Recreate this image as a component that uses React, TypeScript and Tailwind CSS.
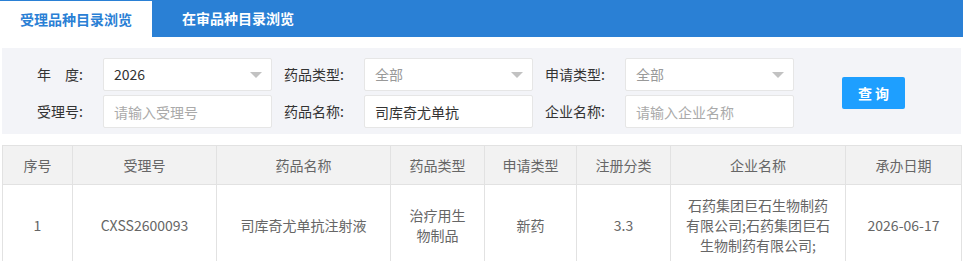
import React, { useState } from "react";

const font = { fontFamily: '"Noto Sans CJK SC", "Microsoft YaHei", sans-serif' };

const SelectBox = ({ value, muted }: { value: string; muted?: boolean }) => (
    <div className="flex items-center justify-between w-[169px] h-[33px] bg-white border border-[#e6e6e6] rounded-[2px] pl-[10px] pr-[9px]">
        <span className={muted ? "text-[14px] text-[#999]" : "text-[14px] text-[#333]"}>{value}</span>
        <svg width="12" height="6" viewBox="0 0 12 6">
            <path d="M0 0 L12 0 L6 6 Z" fill="#c2c2c2" />
        </svg>
    </div>
);

const TextBox = ({ value, placeholder }: { value?: string; placeholder: string }) => (
    <input
        type="text"
        defaultValue={value}
        placeholder={placeholder}
        className="w-[169px] h-[33px] bg-white border border-[#e6e6e6] rounded-[2px] pl-[10px] text-[14px] text-[#333] placeholder:text-[#aaa] outline-none"
        style={font}
    />
);

const Label = ({ children }: { children: React.ReactNode }) => (
    <label className="w-[72px] mr-[20px] text-right text-[14px] text-[#333] whitespace-nowrap">{children}</label>
);

const columns = [
    { title: "序号", width: "w-[70px]" },
    { title: "受理号", width: "w-[144px]" },
    { title: "药品名称", width: "w-[174px]" },
    { title: "药品类型", width: "w-[94px]" },
    { title: "申请类型", width: "w-[92px]" },
    { title: "注册分类", width: "w-[94px]" },
    { title: "企业名称", width: "w-[175px]" },
    { title: "承办日期", width: "w-[116px]" },
];

const rows = [
    [
        "1",
        "CXSS2600093",
        "司库奇尤单抗注射液",
        "治疗用生物制品",
        "新药",
        "3.3",
        "石药集团巨石生物制药有限公司;石药集团巨石生物制药有限公司;",
        "2026-06-17",
    ],
];

export default function App() {
    const [tab, setTab] = useState(0);
    const tabs = ["受理品种目录浏览", "在审品种目录浏览"];

    return (
        <div className="w-[963px] bg-white" style={font}>
            {/* Tabs */}
            <div className="flex h-[37px] bg-[#2a80d5]">
                {tabs.map((t, i) => (
                    <button
                        key={t}
                        onClick={() => setTab(i)}
                        className={
                            i === tab
                                ? "mt-[1px] h-[36px] px-[20px] bg-white text-[#2a80d5] text-[14px] font-bold"
                                : "ml-[10px] h-[37px] px-[20px] text-white text-[14px] font-bold"
                        }
                    >
                        {t}
                    </button>
                ))}
            </div>

            <div className="px-[2px]">
                {/* Filter */}
                <div className="mt-[11px] flex items-center bg-[#f3f4f8] pl-[9px] pt-[10px] pb-[6px]">
                    <div className="flex flex-col gap-[4px]">
                        <div className="flex items-center">
                            <Label>年　度:</Label>
                            <SelectBox value="2026" />
                            <Label>药品类型:</Label>
                            <SelectBox value="全部" muted />
                            <Label>申请类型:</Label>
                            <SelectBox value="全部" muted />
                        </div>
                        <div className="flex items-center">
                            <Label>受理号:</Label>
                            <TextBox placeholder="请输入受理号" />
                            <Label>药品名称:</Label>
                            <TextBox value="司库奇尤单抗" placeholder="请输入药品名称" />
                            <Label>企业名称:</Label>
                            <TextBox placeholder="请输入企业名称" />
                        </div>
                    </div>
                    <button className="ml-[48px] w-[63px] h-[32px] bg-[#1e9fff] rounded-[2px] text-white text-[14px] font-bold">
                        查 询
                    </button>
                </div>

                {/* Table */}
                <table className="mt-[11px] w-[959px] table-fixed border-collapse text-[14px] text-[#666]">
                    <colgroup>
                        {columns.map((c) => (
                            <col key={c.title} className={c.width} />
                        ))}
                    </colgroup>
                    <thead>
                        <tr className="bg-[#f2f2f2] h-[39px]">
                            {columns.map((c) => (
                                <th key={c.title} className="border border-[#e2e2e2] font-normal text-[#666]">
                                    {c.title}
                                </th>
                            ))}
                        </tr>
                    </thead>
                    <tbody>
                        {rows.map((r) => (
                            <tr key={r[0]}>
                                {r.map((cell, i) => (
                                    <td key={i} className="border border-[#e2e2e2] px-3 py-[10px] text-center leading-[20px] break-all">
                                        {cell}
                                    </td>
                                ))}
                            </tr>
                        ))}
                    </tbody>
                </table>
            </div>
        </div>
    );
}
